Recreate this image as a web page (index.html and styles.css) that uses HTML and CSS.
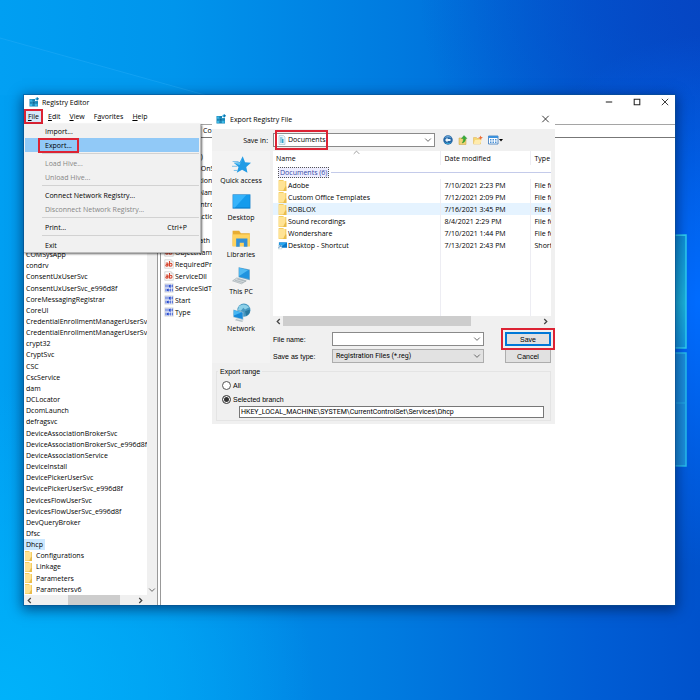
FILE: index.html
```html
<!DOCTYPE html>
<html lang="en">
<head>
<meta charset="utf-8">
<title>Registry Editor</title>
<link rel="stylesheet" href="styles.css">
</head>
<body>
<svg class="defs" aria-hidden="true">
  <symbol id="regedit" viewBox="0 0 20 20">
    <path fill="#1583b5" d="M1 4h11v4h6v11H1z"/>
    <path fill="#36b6e6" d="M2 5h4v4H2zM2 14h4v4H2zM12 14h5v4h-5z"/>
    <path fill="#0a6696" d="M7 9h5v5H7z"/>
    <path stroke="#8adcf5" stroke-width=".4" d="M1 9.3h17M1 13.8h17M6.500 4v15M12 8v11" fill="none"/>
    <path fill="#2aa5dc" d="m13 2 4-1.500 2.500 3L17 7l-4-1z"/>
    <path fill="#0d6ea6" d="m17 .5 2.500 3L17 7l-1-3.500z"/>
  </symbol>
  <symbol id="folder" viewBox="0 0 16 20">
    <path fill="#f3cd62" d="M1 0h9v2h5v18H1z"/>
    <path fill="#ffe394" d="M1 2h12v16l-12 1z"/>
    <path fill="#e9bc4b" d="M13 12h2v8H9z"/>
  </symbol>
  <symbol id="shortcut" viewBox="0 0 20 16">
    <path fill="#0878c8" d="M2 1h18v12H2z"/>
    <path fill="#27a5ef" d="M3 2h16L6 12H3z"/>
    <path fill="#fff" stroke="#7aa" stroke-width=".7" d="M.5 7.500h8v8h-8z"/>
    <path fill="none" stroke="#1964b8" stroke-width="1.500" d="M2 14c0-3 1-4 4-4M4 8.500h3v3"/>
  </symbol>
  <symbol id="string" viewBox="0 0 20 20">
    <path fill="#fdfdfd" stroke="#b4b4b4" d="M1.500 1.500h13l4 4v13h-17z"/>
    <path fill="none" stroke="#b4b4b4" d="M14.500 1.500v4h4"/>
    <g fill="none" stroke="#d3432c" stroke-width="2.200"><path d="M3.500 8.500q4.500-1.500 4.500 1.500v4.500M8 10.500c-3 0-4.500.5-4.500 2.200S7 15 8 12.500M11 4v11"/><ellipse cx="13.500" cy="11.500" rx="2.500" ry="3"/></g>
  </symbol>
  <symbol id="binary" viewBox="0 0 20 20">
    <path fill="#fdfdfd" stroke="#c4c4c4" d="M1.500 1.500h17v17h-17z"/>
    <g fill="none" stroke="#2b4fd0" stroke-width="2"><path d="M4 3v6M16.500 3v6M8 3v6M4 11v6M12.500 11v6M16.500 11v6"/><path d="M11 4h2.500v4.500H11zM7 12h2.500v4H7z"/></g>
  </symbol>
  <symbol id="chevron" viewBox="0 0 10 10"><path d="m1.500 3.200 3.500 3.500 3.500-3.500" fill="none" stroke="#555" stroke-width="1.100"/></symbol>
  <symbol id="arrow" viewBox="0 0 10 10"><path d="M6.800 1.500 3.200 5l3.600 3.500" fill="none" stroke="#444" stroke-width="1.800"/></symbol>
  <symbol id="close" viewBox="0 0 10 10"><path d="m1 1 8 8M9 1 1 9" fill="none" stroke="#222" stroke-width="1.100"/></symbol>
</svg>

<svg class="wallpaper" viewBox="0 0 700 700" preserveAspectRatio="none" aria-hidden="true">
  <defs>
    <linearGradient id="pane" x1="0" x2="1"><stop offset="0" stop-color="#0a7fd6"/><stop offset="1" stop-color="#1b8fdd"/></linearGradient>
    <linearGradient id="glow" x1="0" y1="0" x2="0" y2="1"><stop offset="0" stop-color="#0e8fd8"/><stop offset=".6" stop-color="#1bb4dc"/><stop offset="1" stop-color="#1397e2"/></linearGradient>
  </defs>
  <path d="m0 38 205 57H0z" fill="#0aa2f6" opacity=".22"/>
  <path d="m0 38 205 57" stroke="#2db0fa" opacity=".4"/>
  <path d="M560 237l126-2v113l-126-1z" fill="url(#glow)" stroke="#2fd0f2" stroke-width="1.500"/>
  <path d="M560 353h126v113l-126-2z" fill="url(#pane)" stroke="#28c0f0" stroke-width="1.500"/>
  <path d="M676 403h10" stroke="#22b0ea"/>
</svg>

<main class="window">
  <header class="titlebar">
    <svg class="icon"><use href="#regedit"/></svg>
    <h1>Registry Editor</h1>
    <div class="controls">
      <button aria-label="Minimize"><svg viewBox="0 0 10 10"><path d="M1 5h8" stroke="#222" stroke-width="1.300"/></svg></button>
      <button aria-label="Maximize"><svg viewBox="0 0 10 10"><path d="M1.500 1.500h7v7h-7z" fill="none" stroke="#222" stroke-width="1.300"/></svg></button>
      <button aria-label="Close"><svg><use href="#close"/></svg></button>
    </div>
  </header>
  <nav class="menubar">
    <button class="current"><u>F</u>ile</button>
    <button><u>E</u>dit</button>
    <button><u>V</u>iew</button>
    <button>F<u>a</u>vorites</button>
    <button><u>H</u>elp</button>
  </nav>
  <div class="address">Co</div>

  <div class="panes">
    <section class="keys" aria-label="Keys">
      <div class="keys-view">
        <ul class="tree">
          <li>COMSysApp</li><li>condrv</li><li>ConsentUxUserSvc</li><li>ConsentUxUserSvc_e996d8f</li>
          <li>CoreMessagingRegistrar</li><li>CoreUI</li><li>CredentialEnrollmentManagerUserSvc</li>
          <li>CredentialEnrollmentManagerUserSvc</li><li>crypt32</li><li>CryptSvc</li><li>CSC</li>
          <li>CscService</li><li>dam</li><li>DCLocator</li><li>DcomLaunch</li><li>defragsvc</li>
          <li>DeviceAssociationBrokerSvc</li><li>DeviceAssociationBrokerSvc_e996d8f</li>
          <li>DeviceAssociationService</li><li>DeviceInstall</li><li>DevicePickerUserSvc</li>
          <li>DevicePickerUserSvc_e996d8f</li><li>DevicesFlowUserSvc</li><li>DevicesFlowUserSvc_e996d8f</li>
          <li>DevQueryBroker</li><li>Dfsc</li><li><span class="picked">Dhcp</span></li>
          <li class="sub"><svg><use href="#folder"/></svg>Configurations</li>
          <li class="sub"><svg><use href="#folder"/></svg>Linkage</li>
          <li class="sub"><svg><use href="#folder"/></svg>Parameters</li>
          <li class="sub"><svg><use href="#folder"/></svg>Parametersv6</li>
        </ul>
        <div class="vscroll"><svg><use href="#chevron"/></svg></div>
      </div>
      <div class="hscroll"><svg><use href="#arrow"/></svg><div class="track"><div class="thumb"></div></div><svg class="flip"><use href="#arrow"/></svg></div>
    </section>
    <section class="values" aria-label="Values">
      <ul>
        <li><svg><use href="#string"/></svg>(Default)</li>
        <li><svg><use href="#string"/></svg>DependOnService</li>
        <li><svg><use href="#string"/></svg>Description</li>
        <li><svg><use href="#string"/></svg>DisplayName</li>
        <li><svg><use href="#binary"/></svg>ErrorControl</li>
        <li><svg><use href="#binary"/></svg>FailureActions</li>
        <li><svg><use href="#string"/></svg>Group</li>
        <li><svg><use href="#string"/></svg>ImagePath</li>
        <li><svg><use href="#string"/></svg>ObjectName</li>
        <li><svg><use href="#string"/></svg>RequiredPrivileges</li>
        <li><svg><use href="#string"/></svg>ServiceDll</li>
        <li><svg><use href="#binary"/></svg>ServiceSidType</li>
        <li><svg><use href="#binary"/></svg>Start</li>
        <li><svg><use href="#binary"/></svg>Type</li>
      </ul>
    </section>
  </div>

  <div class="menu" role="menu">
    <button role="menuitem">Import...</button>
    <button role="menuitem" class="active"><span class="mark">Export...</span></button>
    <hr>
    <button role="menuitem" disabled>Load Hive...</button>
    <button role="menuitem" disabled>Unload Hive...</button>
    <hr>
    <button role="menuitem">Connect Network Registry...</button>
    <button role="menuitem" disabled>Disconnect Network Registry...</button>
    <hr>
    <button role="menuitem">Print...<span>Ctrl+P</span></button>
    <hr>
    <button role="menuitem">Exit</button>
  </div>

  <form class="dialog" role="dialog" aria-labelledby="dialog-title">
    <header class="dialog-title">
      <svg class="icon"><use href="#regedit"/></svg>
      <h2 id="dialog-title">Export Registry File</h2>
      <button type="button" aria-label="Close dialog"><svg><use href="#close"/></svg></button>
    </header>
    <div class="savein">
      <label for="folder-choice">Save in:</label>
      <div class="combo place">
        <svg class="doc" viewBox="0 0 16 20"><path fill="#e9f5fa" stroke="#8bb5c6" d="M2 1h9l3 3v15H2z"/><path stroke="#2a9fc8" stroke-width="1.800" d="M4 6h5M4 10h8M4 14h8M9 8v8"/></svg>
        <select id="folder-choice"><option>Documents</option></select>
        <svg class="drop"><use href="#chevron"/></svg>
      </div>
      <div class="tools">
        <button type="button" aria-label="Back"><svg viewBox="0 0 20 20"><circle cx="10" cy="10" r="9.500" fill="#2667a5"/><path d="M3 6a8 8 0 0 1 14 0q-7-3-14 0" fill="#70aee0"/><path d="M3 14q7 5 14 0a8 8 0 0 1-14 0" fill="#39c1e9"/><path d="m9 5-5 5 5 5v-3h6V8H9z" fill="#e7f4fc"/></svg></button>
        <button type="button" aria-label="Up one level"><svg viewBox="0 0 20 20"><path fill="#eed477" stroke="#c9a13b" d="M2 6h6l1 2h7v11H2z"/><path fill="#35ae35" stroke="#188022" stroke-width=".7" d="m12 1 6 6h-3c0 5-2 8-7 9 2-2 3-5 3-9H7z"/></svg></button>
        <button type="button" aria-label="New folder"><svg viewBox="0 0 20 20"><path fill="#f6d873" stroke="#dfb14d" d="M1 5h6l1 2h7v11H1z"/><path fill="#ffebad" d="m4 10 14-1-4 9H1z"/><path fill="#ed6d35" d="m15 1 1.500 3L20 5l-3 1.500L16 10l-2-3-4-1 3.500-1.500z"/></svg></button>
        <button type="button" aria-label="View menu" class="wide"><svg viewBox="0 0 30 20"><path fill="#fff" stroke="#256bb4" stroke-width="1.500" d="M1 2h19v16H1z"/><path fill="#3b91dc" d="M1 2h19v4H1z"/><path stroke="#4a91d6" stroke-width="2" stroke-dasharray="3 2" d="M4 9h14M4 12h14M4 15h14"/><path d="M22 8h8l-4 5z"/></svg></button>
      </div>
    </div>
    <div class="browse">
      <nav class="places">
        <button type="button"><svg viewBox="0 0 32 32"><path fill="#219be5" d="m18 2 4 10 10 1-8 7 2 10-9-5-9 5 3-10-8-7 10-1z"/><path fill="#62c5f5" d="m18 2-3 11-12 1 10 3z"/><path stroke="#6db8e6" stroke-width="1.500" d="M1 11h10M0 19h9M3 26h6"/></svg>Quick access</button>
        <button type="button"><svg viewBox="0 0 32 32"><path fill="#087bc9" d="M1 4h30v24H1z"/><path fill="#149bed" d="M2 5h28v21H2z"/><path fill="#36b3fa" d="M2 5h22L5 26H2z"/></svg>Desktop</button>
        <button type="button"><svg viewBox="0 0 32 32"><path fill="#e7ad33" d="M1 3h11l3 4h15v22H1z"/><path fill="#ffd35f" d="M1 9h29v20H1z"/><path fill="#3290d7" d="M7 30V16h19v14h-6v-7h-7v7z"/></svg>Libraries</button>
        <button type="button"><svg viewBox="0 0 32 32"><path fill="#6fa6c7" d="m11 2 19 4v18l-19-5z"/><path fill="#2094df" d="m12 3 17 4v15l-17-4z"/><path fill="#51bbf3" d="m12 3 15 4-15 10z"/><path fill="#d3dadd" stroke="#9ba7ac" d="m8 20 16 5-8 5-15-5z"/><path stroke="#8a979d" stroke-width=".8" d="m5 24 14 4M9 22l14 4"/></svg>This PC</button>
        <button type="button"><svg viewBox="0 0 32 32"><circle cx="20" cy="12" r="11" fill="#4798c1"/><path fill="#8cd0e8" d="M12 5q9-6 17 2l-7 4-3-3-4 5-5-1z"/><path fill="#29799f" d="m22 14 8-3q1 7-6 11z"/><path fill="#a9c7d5" d="m2 11 17 4v14L2 24z"/><path fill="#168bdb" d="m3 12 15 4v11L3 23z"/><path fill="#46b7f3" d="m3 12 13 4L3 21z"/><path fill="#b6c2c8" d="m7 27 12 3-2 2-12-3z"/></svg>Network</button>
      </nav>
      <div class="fields">
        <div class="files">
          <svg class="sort" viewBox="0 0 10 10"><path d="m1 7 4-4 4 4" fill="none" stroke="#777"/></svg>
          <table>
            <colgroup><col><col class="date"><col class="type"></colgroup>
            <thead><tr><th>Name</th><th>Date modified</th><th>Type</th></tr></thead>
            <tbody>
              <tr class="group"><td colspan="3"><div><span>Documents (6)</span></div></td></tr>
              <tr><td><svg><use href="#folder"/></svg>Adobe</td><td>7/10/2021 2:23 PM</td><td>File folder</td></tr>
              <tr><td><svg><use href="#folder"/></svg>Custom Office Templates</td><td>7/12/2021 2:09 PM</td><td>File folder</td></tr>
              <tr class="hover"><td><svg><use href="#folder"/></svg>ROBLOX</td><td>7/16/2021 3:45 PM</td><td>File folder</td></tr>
              <tr><td><svg><use href="#folder"/></svg>Sound recordings</td><td>8/4/2021 2:29 PM</td><td>File folder</td></tr>
              <tr><td><svg><use href="#folder"/></svg>Wondershare</td><td>7/10/2021 1:44 PM</td><td>File folder</td></tr>
              <tr><td><svg><use href="#shortcut"/></svg>Desktop - Shortcut</td><td>7/13/2021 2:43 PM</td><td>Shortcut</td></tr>
              <tr class="rest"><td></td><td></td><td></td></tr>
            </tbody>
          </table>
        </div>
        <div class="hscroll files-scroll"><svg><use href="#arrow"/></svg><div class="track"><div class="thumb"></div></div><svg class="flip"><use href="#arrow"/></svg></div>
        <div class="entry">
          <label for="file-name">File name:</label>
          <div class="combo"><input id="file-name" type="text"><svg class="drop"><use href="#chevron"/></svg></div>
          <button class="save">Save</button>
          <label for="file-type">Save as type:</label>
          <div class="combo filetype"><select id="file-type"><option>Registration Files (*.reg)</option></select><svg class="drop"><use href="#chevron"/></svg></div>
          <button type="button">Cancel</button>
        </div>
      </div>
    </div>
    <fieldset class="range">
      <legend>Export range</legend>
      <label><input type="radio" name="range">All</label>
      <label><input type="radio" name="range" checked>Selected branch</label>
      <input type="text" aria-label="Branch" value="HKEY_LOCAL_MACHINE\SYSTEM\CurrentControlSet\Services\Dhcp">
    </fieldset>
  </form>
</main>
</body>
</html>
```
FILE: styles.css
```css
*, *::before, *::after { box-sizing: border-box; }

body {
  margin: 0;
  min-height: 100vh;
  position: relative;
  overflow: hidden;
  font-family: "Open Sans", "Noto Sans", sans-serif;
  font-size: 7px;
  line-height: 11px;
  color: #000;
  background:
    radial-gradient(ellipse 30% 38% at 100% 43%, #006cff 0%, rgba(0, 108, 255, 0) 100%),
    radial-gradient(ellipse 45% 35% at 105% 0%, #0644c2 0%, rgba(6, 68, 194, 0) 100%),
    radial-gradient(ellipse 45% 45% at 0% 100%, #00b2fa 0%, rgba(0, 178, 250, 0) 100%),
    linear-gradient(to right, #009ff2 0%, #0095ec 25%, #007ce0 55%, #005dd4 85%, #0052cc 100%);
}

button, input, select {
  font: inherit;
  color: inherit;
  margin: 0;
  padding: 0;
  border: 0;
  border-radius: 0;
  background: none;
}

h1, h2 { margin: 0; font-size: 7px; font-weight: 400; }
ul { margin: 0; padding: 0; list-style: none; }
svg { display: block; flex: none; }

.defs { position: absolute; width: 0; height: 0; }
.wallpaper { position: absolute; inset: 0; width: 100%; height: 100%; }
.icon { width: 10px; height: 10px; }

.window {
  position: absolute;
  inset: 95px 25px 95px 24px;
  display: flex;
  flex-direction: column;
  background: #fff;
  box-shadow: 0 0 0 1px rgba(10, 80, 140, .5), 0 3px 12px 2px rgba(0, 25, 70, .6);
}

.titlebar { display: flex; align-items: center; gap: 3px; height: 14px; padding-left: 5px; }
.controls { display: flex; gap: 18px; margin-left: auto; padding-right: 5px; }
.controls svg { width: 10px; height: 8px; }

.menubar { display: flex; gap: 9px; height: 15px; }
.menubar button { line-height: 16px; }
.menubar .current { width: 19px; margin-right: -4px; background: #d5e9fa; border: 2px solid #dc2334; line-height: 12px; }

.address {
  height: 14px;
  padding-left: 179px;
  border-top: 1px solid #a5a5a5;
  border-bottom: 1px solid #777;
  line-height: 12px;
}

.panes { flex: 1; display: flex; min-height: 0; }
.keys { width: 134px; display: flex; flex-direction: column; border-right: 1px solid #999; }
.keys-view { flex: 1; display: flex; min-height: 0; padding-top: 111px; }
.tree { flex: 1; display: flex; flex-direction: column; min-width: 0; overflow: hidden; }
.tree li { flex: 1; display: flex; align-items: center; padding-left: 2px; white-space: nowrap; }
.tree .picked { margin-left: -2px; padding: 0 2px; background: #cce8ff; }
.tree .sub { gap: 3px; padding-left: 0; }
.tree .sub svg { width: 9px; height: 10px; }
.vscroll { width: 10px; display: flex; align-items: flex-end; background: #f0f0f0; }
.vscroll svg { width: 8px; height: 10px; margin: 0 1px; }

.hscroll { display: flex; align-items: center; height: 10px; padding: 0 2px; background: #f0f0f0; }
.hscroll svg { width: 7px; height: 7px; }
.hscroll .flip { transform: scaleX(-1); }
.track { flex: 1; height: 100%; margin: 0 1px; }
.thumb { height: 100%; background: #cdcdcd; }
.keys .hscroll { padding-right: 13px; }
.keys .thumb { width: 52px; margin-left: 34px; }

.values { flex: 1; margin-left: 2px; padding: 12px 3px; border-left: 1px solid #999; }
.values li { display: flex; align-items: center; gap: 1px; height: 12px; }
.values svg { width: 10px; height: 10px; }

.menu {
  position: absolute;
  top: 29px;
  left: 0;
  width: 177px;
  padding: 0 1px;
  background: #f1f1f1;
  border: solid #bbb;
  border-width: 0 1px 1px 0;
  box-shadow: 1px 1px 2px rgba(0, 0, 0, .6);
}
.menu button {
  display: flex;
  align-items: center;
  justify-content: space-between;
  width: 100%;
  height: 14px;
  padding: 0 12px 0 20px;
}
.menu button:disabled { color: #868686; }
.menu .active { background: #91c9f7; }
.menu hr { height: 1px; margin: 1px 0 2px 17px; border: 0; background: #d2d2d2; }
.mark { margin: 0 -7px; padding: 0 5px; border: 2px solid #dc2334; }

.dialog {
  position: absolute;
  top: 16px;
  left: 188px;
  right: 120px;
  padding-bottom: 3px;
  background: #f0f0f0;
}
.dialog-title { display: flex; align-items: center; gap: 4px; height: 18px; padding: 0 5px 2px 4px; background: #fff; }
.dialog-title button { margin-left: auto; }
.dialog-title button svg { width: 9px; height: 8px; }

.savein { display: flex; align-items: center; height: 22px; }
.savein label { width: 61px; padding-right: 5px; text-align: right; }
.combo { position: relative; height: 14px; background: #fff; border: 1px solid #8a8a8a; }
.combo select, .combo input { display: block; width: 100%; height: 12px; padding: 0 12px 0 3px; appearance: none; line-height: 12px; outline: 0; }
.combo .drop { position: absolute; top: 2px; right: 2px; width: 8px; height: 8px; pointer-events: none; }
.place { flex: 1; }
.place select { padding-left: 14px; }
.place::after { content: ""; position: absolute; inset: -4px auto -4px 1px; width: 53px; border: 2px solid #dc2334; pointer-events: none; }
.doc { position: absolute; top: 1px; left: 4px; width: 8px; height: 10px; }
.tools { display: flex; gap: 5px; padding: 0 52px 0 8px; }
.tools svg { width: 10px; height: 10px; }
.tools .wide svg { width: 15px; }

.browse { display: flex; }
.places { width: 58px; display: flex; flex-direction: column; gap: 6px; padding-top: 4px; background: #f3f3f3; }
.places button { height: 31px; display: flex; flex-direction: column; align-items: center; justify-content: space-between; }
.places svg { width: 19px; height: 19px; }

.fields { flex: 1; min-width: 0; margin: 0 4px 0 3px; }
.files { position: relative; height: 165px; background: #fff; }
.sort { position: absolute; top: -2px; left: 80px; width: 7px; height: 7px; }
.files table { width: 100%; height: 100%; table-layout: fixed; border-collapse: collapse; }
.files .date { width: 90px; }
.files .type { width: 21px; }
.files th { height: 14px; padding: 0 0 0 3px; text-align: left; font-weight: 400; overflow: hidden; }
.files td { height: 12px; padding: 0 0 0 3px; white-space: nowrap; overflow: hidden; }
.files th + th, .files td + td { padding-left: 4px; border-left: 1px solid #ededf3; }
.files td svg { float: left; width: 9px; height: 11px; margin: 0 1px 0 2px; }
.files .group td { height: 14px; }
.files .group div { display: flex; align-items: center; gap: 2px; color: #3448a5; }
.files .group div::after { content: ""; flex: 1; height: 1px; background: #c4cbea; }
.files .group span { padding: 0 1px; margin-left: 2px; line-height: 9px; border: 1px dotted #555; background: #eef; }
.files .hover { background: #e5f3ff; }
.files .rest td { height: auto; }
.files-scroll .thumb { width: 73%; }

.entry {
  display: grid;
  grid-template-columns: 59px 1fr 46px;
  row-gap: 3px;
  align-items: center;
  padding-top: 6px;
  font-family: "Liberation Sans", sans-serif;
}
.entry .combo { margin-right: 21px; }
.entry .filetype { background: #e2e2e2; border-color: #adadad; font-family: Roboto, sans-serif; }
.entry button { height: 14px; background: #e1e1e1; border: 1px solid #adadad; }
.entry .save { position: relative; border: 1px solid #0078d7; outline: 2px solid #dc2334; outline-offset: 2px; box-shadow: inset 0 0 0 1px #0078d7; }

.range {
  margin: 3px 4px 0;
  padding: 1px 6px 2px;
  border: 1px solid #e4e4e4;
  font-family: "Liberation Sans", sans-serif;
}
.range legend { padding: 0 2px; margin-left: -5px; }
.range label { display: flex; align-items: center; gap: 2px; height: 14px; margin-left: -1px; }
.range [type="radio"] { appearance: none; width: 9px; height: 9px; border: 1px solid #555; border-radius: 50%; background: #fff; }
.range [type="radio"]:checked { background: #333; box-shadow: inset 0 0 0 1px #fff; }
.range [type="text"] { display: block; width: calc(100% - 16px); height: 12px; margin-left: 16px; padding: 0 1px; border: 1px solid #777; background: #fff; font-family: Roboto, sans-serif; }
```
